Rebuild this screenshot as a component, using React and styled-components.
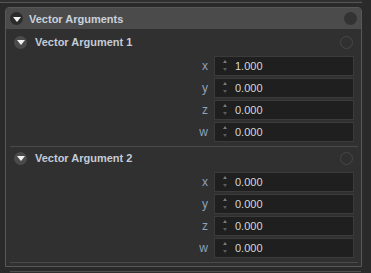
import React from 'react';
import styled, { createGlobalStyle } from 'styled-components';

const GlobalStyle = createGlobalStyle`
	html, body {
		margin: 0;
		padding: 0;
		background: #2a2a2a;
	}
	* {
		box-sizing: border-box;
	}
`;

const Screen = styled.div`
	width: 371px;
	height: 273px;
	overflow: hidden;
	background: #2a2a2a;
	font-family: "Liberation Sans", Arial, sans-serif;
`;

const PrevEdge = styled.div`
	width: 362px;
	height: 3px;
	background: #303030;
	border-bottom: 1px solid #565656;
`;

const NextEdge = styled.div`
	margin: 4px 0 0 10px;
	width: 351px;
	height: 3px;
	border-top: 1px solid #505050;
	background: #2e2e2e;
`;

const Panel = styled.div`
	margin: 4px 0 0 5px;
	width: 357px;
	height: 260px;
	border: 1px solid #585858;
	border-radius: 4px 4px 0 0;
	background: #303030;
	display: flex;
	flex-direction: column;
`;

const PanelHeader = styled.div`
	height: 21px;
	background: #4b4b4b;
	border-radius: 3px 3px 0 0;
	display: flex;
	align-items: center;
	padding: 0 4px 0 4px;
`;

const Toggle = styled.div`
	width: 13px;
	height: 13px;
	border-radius: 50%;
	background: ${p => (p.$dark ? '#2b2b2b' : '#4b4b4b')};
	display: flex;
	align-items: center;
	justify-content: center;
	flex: none;

	&::after {
		content: '';
		width: 0;
		height: 0;
		margin-top: 1px;
		border-left: 4px solid transparent;
		border-right: 4px solid transparent;
		border-top: 5px solid #f2f2f2;
	}
`;

const Title = styled.span`
	font-size: 11px;
	font-weight: bold;
	color: ${p => (p.$sub ? '#c3ccd8' : '#c9d2dd')};
	margin-left: ${p => (p.$sub ? '8px' : '6px')};
	flex: 1;
`;

const Dot = styled.div`
	width: 13px;
	height: 13px;
	border-radius: 50%;
	flex: none;
	background: ${p => (p.$filled ? '#333333' : 'transparent')};
	border: ${p => (p.$filled ? 'none' : '1px solid #474747')};
	margin-right: ${p => (p.$filled ? '0' : '5px')};
`;

const Body = styled.div`
	padding: 2px 3px 0 4px;
`;

const Section = styled.div`
	border-bottom: 1px solid #4a4a4a;
	padding-bottom: 5px;
`;

const SectionHeader = styled.div`
	height: 22px;
	display: flex;
	align-items: center;
	padding-left: 4px;
`;

const Fields = styled.div`
	margin-top: 3px;
	display: flex;
	flex-direction: column;
	gap: 3px;
	padding-right: 4px;
`;

const Row = styled.div`
	display: flex;
	justify-content: flex-end;
	align-items: center;
	gap: 6px;
	height: 19px;
`;

const Label = styled.span`
	font-size: 12px;
	color: #8ea2ba;
	text-align: right;
`;

const Input = styled.div`
	width: 140px;
	height: 20px;
	background: #1f1f1f;
	border: 1px solid #3b3b3b;
	display: flex;
	align-items: center;
`;

const Spinner = styled.div`
	width: 9px;
	margin-left: 5px;
	display: flex;
	flex-direction: column;
	align-items: center;
	gap: 5px;

	&::before, &::after {
		content: '';
		width: 0;
		height: 0;
		border-left: 2px solid transparent;
		border-right: 2px solid transparent;
	}
	&::before {
		border-bottom: 3px solid #7a7a7a;
	}
	&::after {
		border-top: 3px solid #5c5c5c;
	}
`;

const Value = styled.span`
	margin-left: 6px;
	font-size: 11px;
	color: #d6d6d6;
`;

const vectors = [
	{ name: 'Vector Argument 1', values: ['1.000', '0.000', '0.000', '0.000'] },
	{ name: 'Vector Argument 2', values: ['0.000', '0.000', '0.000', '0.000'] },
];

const axes = ['x', 'y', 'z', 'w'];

const App = () => (
	<Screen>
		<GlobalStyle />
		<PrevEdge />
		<Panel>
			<PanelHeader>
				<Toggle $dark />
				<Title>Vector Arguments</Title>
				<Dot $filled />
			</PanelHeader>
			<Body>
				{vectors.map(vec => (
					<Section key={vec.name}>
						<SectionHeader>
							<Toggle />
							<Title $sub>{vec.name}</Title>
							<Dot />
						</SectionHeader>
						<Fields>
							{vec.values.map((v, i) => (
								<Row key={axes[i]}>
									<Label>{axes[i]}</Label>
									<Input>
										<Spinner />
										<Value>{v}</Value>
									</Input>
								</Row>
							))}
						</Fields>
					</Section>
				))}
			</Body>
		</Panel>
		<NextEdge />
	</Screen>
);

export default App;
